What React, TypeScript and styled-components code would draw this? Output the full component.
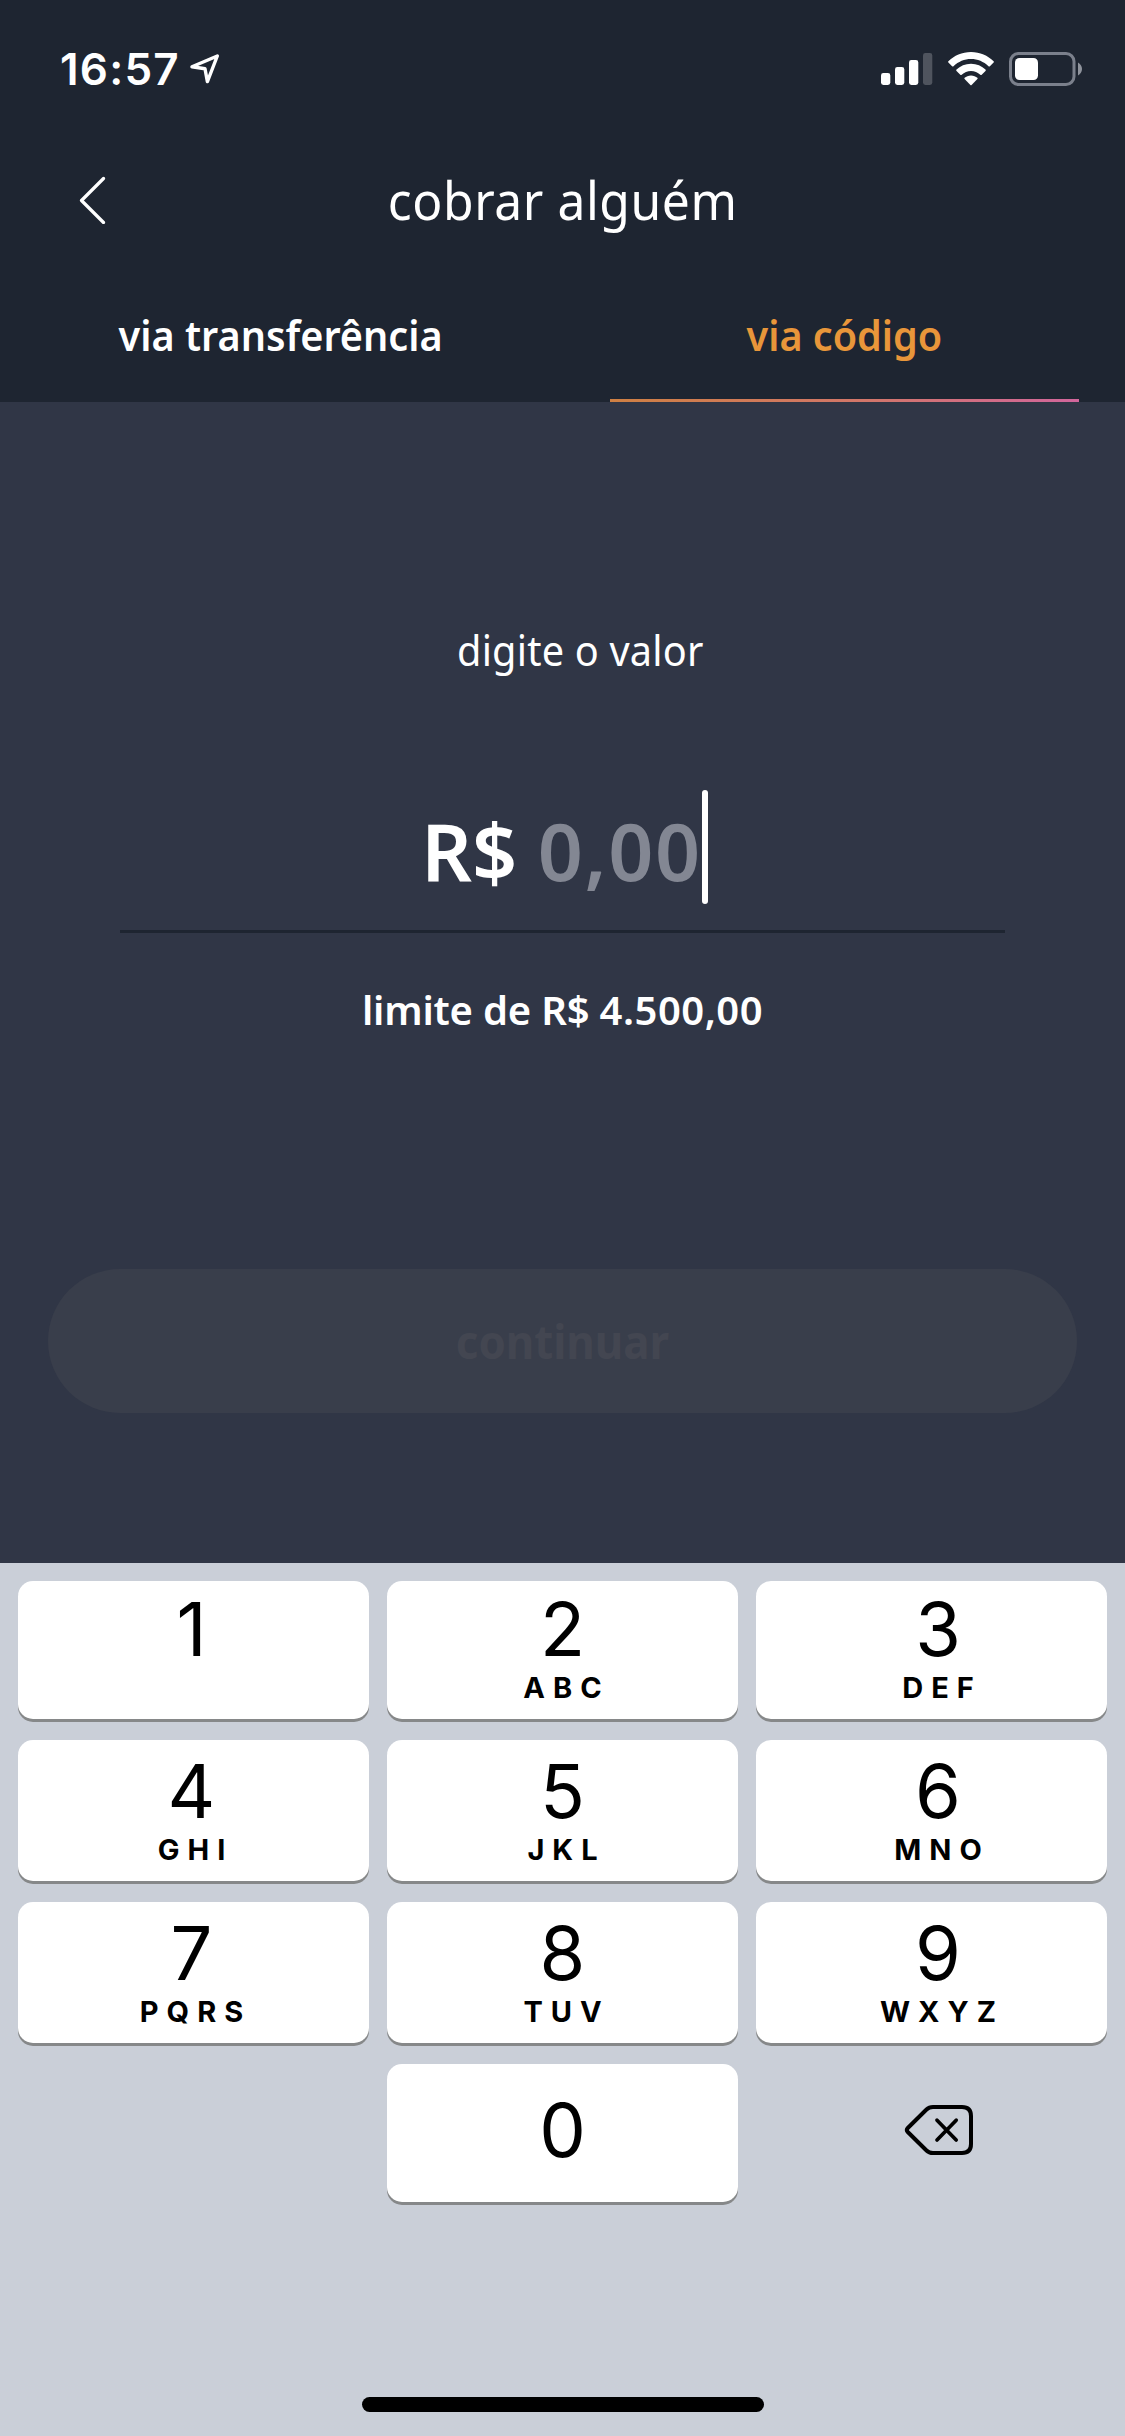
import React from "react";
import styled, { createGlobalStyle } from "styled-components";

const GlobalStyle = createGlobalStyle`
  *, *::before, *::after { box-sizing: border-box; }
  body { margin: 0; background: #303646; }
  button { border: 0; padding: 0; margin: 0; background: none; font: inherit; color: inherit; }
`;

const brandFont = `"Noto Sans", "Open Sans", sans-serif`;
const systemFont = `Inter, "Liberation Sans", sans-serif`;

const Screen = styled.div`
  width: 1125px;
  height: 2436px;
  display: flex;
  flex-direction: column;
  overflow: hidden;
  background: #303646;
  color: #fff;
  font-family: ${brandFont};
`;

const Header = styled.header`
  height: 402px;
  flex: none;
  display: flex;
  flex-direction: column;
  background: #1e2531;
`;

const StatusBar = styled.div`
  height: 138px;
  flex: none;
  display: flex;
  justify-content: space-between;
  align-items: center;
  padding: 0 42px 0 60px;
  font-family: ${systemFont};
`;

const StatusGroup = styled.div<{ $gap: number }>`
  display: flex;
  align-items: center;
  gap: ${(p) => p.$gap}px;
`;

const Clock = styled.span`
  font-size: 44px;
  line-height: 50px;
  font-weight: 600;
  letter-spacing: 1.2px;
`;

const TitleBar = styled.div`
  height: 124px;
  flex: none;
  display: grid;
  grid-template-columns: 120px 1fr 120px;
  align-items: center;
`;

const BackButton = styled.button`
  display: flex;
  justify-content: flex-end;
  padding-right: 13px;
`;

/* Slightly condensed run of brand text, scaled around its own centre. */
const Condensed = styled.span<{ $scale: number }>`
  display: inline-block;
  transform: scaleX(${(p) => p.$scale});
`;

const Title = styled.h1`
  margin: 0;
  font-size: 52px;
  line-height: 124px;
  font-weight: 400;
  letter-spacing: 0.6px;
  text-align: center;
`;

const Tabs = styled.nav`
  flex: 1;
  display: grid;
  grid-template-columns: 469px 469px;
  justify-content: space-between;
  padding: 0 46px;
`;

const Tab = styled.button<{ $active?: boolean }>`
  display: flex;
  flex-direction: column;
  align-items: center;
  justify-content: space-between;
  padding-top: 43px;
  font-size: 41px;
  line-height: 60px;
  font-weight: 600;
  color: ${(p) => (p.$active ? "#e8963a" : "#fff")};
`;

const TabLine = styled.span`
  width: 100%;
  height: 3px;
  background: linear-gradient(90deg, #cf8043, #d2766a 55%, #d2669c);
`;

const Content = styled.main`
  flex: 1;
  display: flex;
  flex-direction: column;
  align-items: center;
`;

const Prompt = styled.label`
  margin: 220px 0 0 36px;
  font-size: 41px;
  line-height: 56px;
  letter-spacing: 0.2px;
`;

const AmountField = styled.div`
  width: 885px;
  height: 143px;
  margin-top: 112px;
  padding-left: 4px;
  display: flex;
  justify-content: center;
  align-items: flex-start;
  border-bottom: 3px solid #1e2531;
  font-size: 79px;
  line-height: 121px;
  font-weight: 600;
  white-space: pre;
`;

const Placeholder = styled.span`
  color: #838793;
  letter-spacing: 1.6px;
`;

const Caret = styled.span`
  width: 6px;
  height: 114px;
  border-radius: 3px;
  background: #fff;
`;

const Limit = styled.p`
  margin: 47px 0 0;
  font-size: 40px;
  line-height: 60px;
  font-weight: 600;
  letter-spacing: -0.2px;
`;

const LimitValue = styled.span`
  letter-spacing: 0.5px;
`;

const ContinueButton = styled.button`
  width: 1029px;
  height: 144px;
  margin-top: 229px;
  border-radius: 72px;
  background: #393e4b;
  color: #434651;
  font-size: 47px;
  line-height: 144px;
  font-weight: 700;
  text-align: center;
`;

const Keyboard = styled.section`
  height: 873px;
  flex: none;
  display: flex;
  flex-direction: column;
  justify-content: space-between;
  padding: 18px 18px 24px;
  background: #cacfd8;
  color: #000;
  font-family: ${systemFont};
`;

const KeyGrid = styled.div`
  display: grid;
  grid-template-columns: repeat(3, 351px);
  grid-template-rows: 138px 141px 141px 138px;
  gap: 21px 18px;
`;

const Key = styled.button<{ $nudge: number; $bare?: boolean; $single?: boolean }>`
  display: flex;
  flex-direction: column;
  align-items: center;
  justify-content: flex-end;
  padding-bottom: ${(p) => (p.$bare ? 46 : p.$single ? 33 : 11)}px;
  padding-left: ${(p) => Math.max(p.$nudge, 0)}px;
  padding-right: ${(p) => Math.max(-p.$nudge, 0)}px;
  border-radius: 15px;
  background: ${(p) => (p.$bare ? "transparent" : "#fff")};
  box-shadow: ${(p) => (p.$bare ? "none" : "0 3px 0 #868889")};
`;

const Digit = styled.span`
  margin-bottom: -1px;
  font-size: 74px;
  line-height: 80px;
  font-weight: 400;
`;

const Letters = styled.span`
  height: 40px;
  font-size: 29px;
  line-height: 40px;
  font-weight: 700;
  letter-spacing: 8px;
  text-indent: 8px;
`;

const HomeIndicator = styled.div`
  width: 402px;
  height: 15px;
  margin: 0 auto;
  border-radius: 8px;
  background: #000;
`;

const LocationIcon = () => (
  <svg width="30" height="30" viewBox="0 0 30 30" fill="none" stroke="#fff" strokeWidth="3.4" strokeLinejoin="round">
    <path d="M2 12.800 27.300 2 17.400 27.600 15 14.800Z" />
  </svg>
);

const SignalIcon = () => (
  <svg width="52" height="34" viewBox="0 0 52 34" fill="#fff">
    <rect x="0" y="21" width="9.3" height="12" rx="2.4" />
    <rect x="14" y="15" width="9.3" height="18" rx="2.4" />
    <rect x="28" y="8" width="9.3" height="25" rx="2.4" />
    <rect x="42" y="1" width="9.3" height="32" rx="2.4" opacity="0.22" />
  </svg>
);

const WifiIcon = () => (
  <svg width="46" height="34" viewBox="0 0 46 34" fill="#fff">
    <path d="M23 0C32 0 39.800 3.600 45.600 9.200Q46.200 9.900 45.600 10.500L41.900 14.200Q41.200 14.800 40.500 14.200C35.600 9.700 29.600 7.100 23 7.100S10.400 9.700 5.500 14.200Q4.800 14.800 4.100 14.200L0.400 10.500Q-0.200 9.900 0.400 9.200C6.200 3.600 14 0 23 0Z" />
    <path d="M23 11.800C28.700 11.800 33.800 14 37.500 17.600Q38.200 18.300 37.500 19L33.700 22.700Q33 23.300 32.300 22.700C29.700 20.400 26.500 19 23 19S16.300 20.400 13.700 22.700Q13 23.300 12.300 22.700L8.500 19Q7.800 18.300 8.500 17.600C12.200 14 17.300 11.800 23 11.800Z" />
    <path d="M23 23.400C25.500 23.400 27.800 24.300 29.400 25.800Q30 26.400 29.400 27.100L23.600 32.900Q23 33.500 22.400 32.900L16.600 27.100Q16 26.400 16.600 25.800C18.200 24.300 20.500 23.400 23 23.400Z" />
  </svg>
);

const BatteryIcon = () => (
  <svg width="74" height="34" viewBox="0 0 74 34">
    <rect x="1.500" y="1.500" width="63.500" height="31" rx="8" fill="none" stroke="#7b808c" strokeWidth="3" />
    <rect x="6" y="6" width="23" height="22" rx="4.500" fill="#fff" />
    <path d="M69 10.500C71.400 11.800 73 14.200 73 17S71.400 22.200 69 23.500Z" fill="#8f939c" />
  </svg>
);

const BackIcon = () => (
  <svg width="28" height="48" viewBox="0 0 28 48" fill="none" stroke="#fff" strokeWidth="3.200" strokeLinecap="round" strokeLinejoin="round">
    <path d="M24.500 2.500 2.500 24.500 24.500 46.500" />
  </svg>
);

const BackspaceIcon = () => (
  <svg width="70" height="52" viewBox="0 0 70 52" fill="none" stroke="#000" strokeWidth="4" strokeLinecap="round" strokeLinejoin="round">
    <path d="M29 3H58Q67 3 67 12V40Q67 49 58 49H29Q25 49 22.500 46.500L3.800 28Q1.900 26 3.800 24L22.500 5.500Q25 3 29 3Z" />
    <path d="M33 16.200 52.200 36M52.200 16.200 33 36" strokeWidth="3.700" />
  </svg>
);

const keys = [
  ["1", ""], ["2", "ABC"], ["3", "DEF"],
  ["4", "GHI"], ["5", "JKL"], ["6", "MNO"],
  ["7", "PQRS"], ["8", "TUV"], ["9", "WXYZ"],
];
const columnNudge = [-4, 0, 13];

export default function App() {
  return (
    <Screen>
      <GlobalStyle />
      <Header>
        <StatusBar>
          <StatusGroup $gap={10}>
            <Clock>16:57</Clock>
            <LocationIcon />
          </StatusGroup>
          <StatusGroup $gap={15}>
            <SignalIcon />
            <WifiIcon />
            <BatteryIcon />
          </StatusGroup>
        </StatusBar>
        <TitleBar>
          <BackButton aria-label="voltar"><BackIcon /></BackButton>
          <Title><Condensed $scale={0.957}>cobrar alguém</Condensed></Title>
        </TitleBar>
        <Tabs>
          <Tab><Condensed $scale={0.967}>via transferência</Condensed></Tab>
          <Tab $active><Condensed $scale={0.965}>via código</Condensed><TabLine /></Tab>
        </Tabs>
      </Header>
      <Content>
        <Prompt><Condensed $scale={0.968}>digite o valor</Condensed></Prompt>
        <AmountField>
          <span>R$ </span>
          <Placeholder>0,00</Placeholder>
          <Caret />
        </AmountField>
        <Limit>limite de R$ <LimitValue>4.500,00</LimitValue></Limit>
        <ContinueButton disabled><Condensed $scale={0.932}>continuar</Condensed></ContinueButton>
      </Content>
      <Keyboard>
        <KeyGrid>
          {keys.map(([digit, letters], i) => (
            <Key key={digit} $nudge={columnNudge[i % 3]}>
              <Digit>{digit}</Digit>
              <Letters>{letters}</Letters>
            </Key>
          ))}
          <span />
          <Key $nudge={0} $single><Digit>0</Digit></Key>
          <Key $nudge={14} $bare aria-label="apagar"><BackspaceIcon /></Key>
        </KeyGrid>
        <HomeIndicator />
      </Keyboard>
    </Screen>
  );
}
